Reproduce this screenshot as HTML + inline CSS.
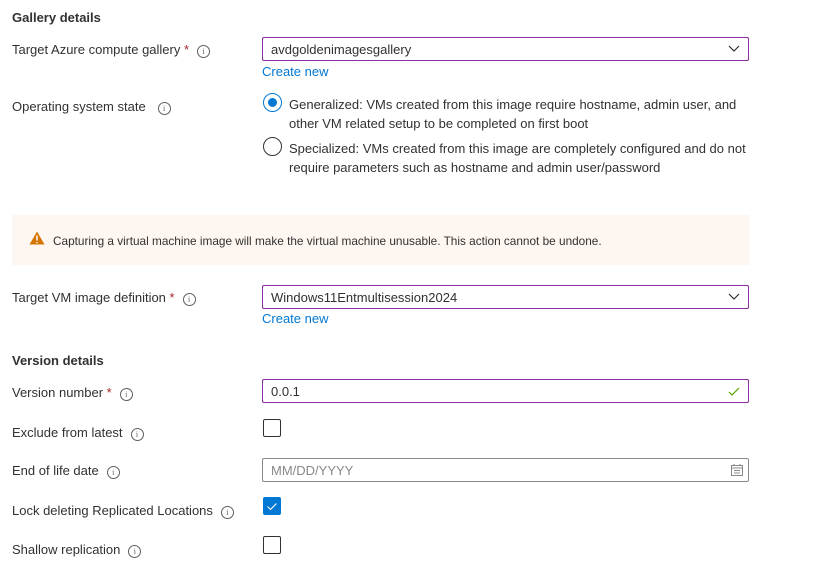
<html><head><style>
body{margin:0;width:813px;height:571px;background:#fff;font-family:"Liberation Sans",sans-serif;font-size:13px;color:#323130;position:relative;overflow:hidden}
.a{position:absolute;white-space:nowrap}
.h{font-weight:bold;font-size:13px}
.req{color:#a4262c}
.i{display:inline-block;width:11px;height:11px;border:1px solid #605e5c;border-radius:50%;font-size:8px;line-height:11px;text-align:center;color:#605e5c;margin-left:8px;vertical-align:0px;font-family:"Liberation Serif",serif}
.in{position:absolute;left:262px;width:485px;height:22px;border:1px solid #8a8886;border-radius:2px;line-height:23px;padding-left:8px;box-sizing:content-box}
.p{border-color:#8a2da5}
.lk{color:#0078d4}
.cb{position:absolute;left:263px;width:16px;height:16px;border:1px solid #323130;border-radius:2px}
.rd{position:absolute;left:263px;width:17px;height:17px;border:1px solid #323130;border-radius:50%}
</style></head><body>
<div class="a h" style="left:12px;top:10px">Gallery details</div>
<div class="a" style="left:12px;top:42px">Target Azure compute gallery <span class="req">*</span><span class="i">i</span></div>
<div class="in p" style="top:37px;width:477px">avdgoldenimagesgallery<svg style="position:absolute;right:8px;top:7px" width="12" height="8"><path d="M1 1l5 5 5-5" fill="none" stroke="#323130" stroke-width="1.2"/></svg></div>
<div class="a lk" style="left:262px;top:64px">Create new</div>
<div class="a" style="left:12px;top:99px">Operating system state<span class="i" style="margin-left:12px">i</span></div>
<div class="rd" style="top:93px;border-color:#0078d4"><div style="position:absolute;left:4px;top:4px;width:9px;height:9px;border-radius:50%;background:#0078d4"></div></div>
<div class="a" style="left:289px;top:95px;line-height:19px">Generalized: VMs created from this image require hostname, admin user, and<br>other VM related setup to be completed on first boot</div>
<div class="rd" style="top:137px"></div>
<div class="a" style="left:289px;top:139px;line-height:19px">Specialized: VMs created from this image are completely configured and do not<br>require parameters such as hostname and admin user/password</div>
<div class="a" style="left:12px;top:215px;width:737px;height:50px;background:#fdf6f1"></div>
<svg class="a" style="left:29px;top:231px" width="16" height="14"><path d="M8 0.5L15.5 13.5H0.5Z" fill="#d47500"/><path d="M8 4.5v5M8 11v1.3" stroke="#fff" stroke-width="1.5"/></svg>
<div class="a" style="left:53px;top:234px;font-size:11.8px">Capturing a virtual machine image will make the virtual machine unusable. This action cannot be undone.</div>
<div class="a" style="left:12px;top:290px">Target VM image definition <span class="req">*</span><span class="i">i</span></div>
<div class="in p" style="top:285px;width:477px">Windows11Entmultisession2024<svg style="position:absolute;right:8px;top:7px" width="12" height="8"><path d="M1 1l5 5 5-5" fill="none" stroke="#323130" stroke-width="1.2"/></svg></div>
<div class="a lk" style="left:262px;top:311px">Create new</div>
<div class="a h" style="left:12px;top:353px">Version details</div>
<div class="a" style="left:12px;top:385px">Version number <span class="req">*</span><span class="i">i</span></div>
<div class="in p" style="top:379px;width:477px">0.0.1<svg style="position:absolute;right:8px;top:7px" width="12" height="9"><path d="M1 5l3 3 7-7" fill="none" stroke="#57a300" stroke-width="1.2"/></svg></div>
<div class="a" style="left:12px;top:425px">Exclude from latest<span class="i">i</span></div>
<div class="cb" style="top:419px"></div>
<div class="a" style="left:12px;top:463px">End of life date<span class="i">i</span></div>
<div class="in" style="top:458px;width:477px;color:#8a8886">MM/DD/YYYY<svg style="position:absolute;right:5px;top:5px" width="12" height="12"><rect x="0.5" y="1.5" width="11" height="10" fill="none" stroke="#8a8886"/><path d="M0.5 4h11M3 0v2M9 0v2M3 6.5h6M3 9h6" stroke="#8a8886"/></svg></div>
<div class="a" style="left:12px;top:503px">Lock deleting Replicated Locations<span class="i">i</span></div>
<div class="cb" style="top:497px;background:#0078d4;border-color:#0078d4"><svg width="16" height="16"><path d="M3.5 8.5l3 3 6-6" fill="none" stroke="#fff" stroke-width="1.1"/></svg></div>
<div class="a" style="left:12px;top:542px">Shallow replication<span class="i">i</span></div>
<div class="cb" style="top:536px"></div>
</body></html>
